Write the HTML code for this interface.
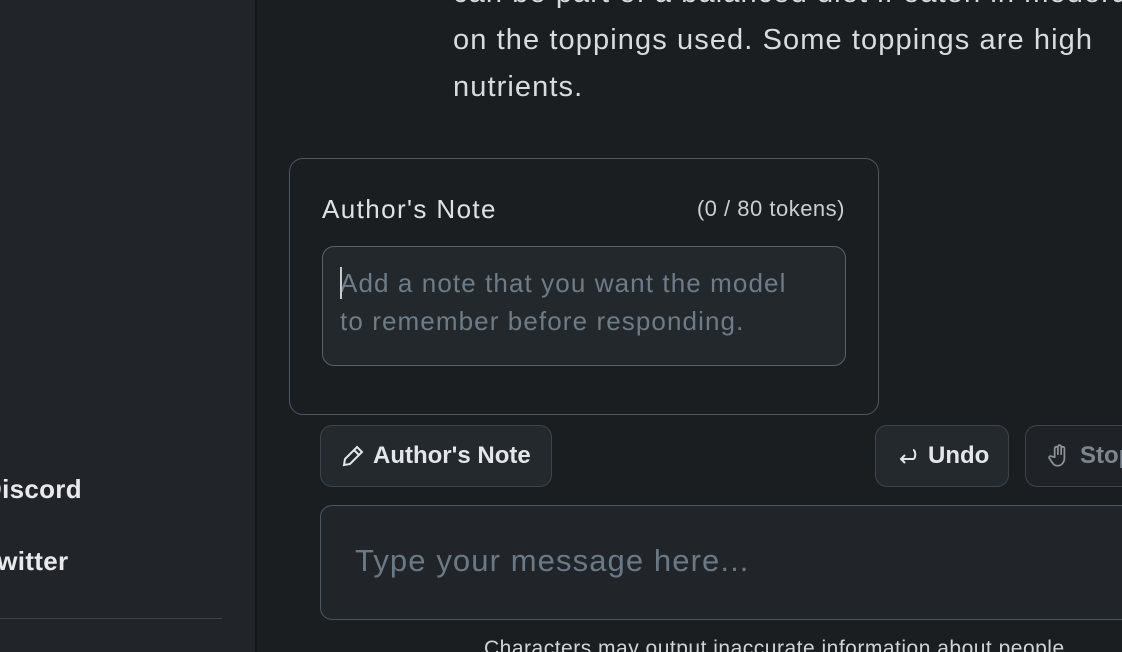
<!DOCTYPE html>
<html><head><style>
html,body{margin:0;width:1122px;height:652px;overflow:hidden}
body{background:#1b1e21;font-family:"Liberation Sans",sans-serif;position:relative}
.wrap{position:absolute;left:0;top:0;width:1122px;height:652px;overflow:hidden}
.side{position:absolute;left:0;top:0;width:255px;height:652px;background:#212529;border-right:2px solid #141618;overflow:hidden}
.sl{position:absolute;left:-17px;font-size:26px;font-weight:bold;color:#e8eaec;letter-spacing:0.3px}
.hr{position:absolute;left:0;top:618px;width:222px;height:1px;background:#3d4349}
.msg{position:absolute;left:453px;top:-30px;font-size:29px;line-height:47px;color:#d8dcdf;white-space:nowrap;letter-spacing:1.1px}
.card{position:absolute;left:289px;top:158px;width:590px;height:257px;border:1.5px solid #4b5863;border-radius:14px;box-sizing:border-box;background:#1b1e21}
.t1{position:absolute;left:322px;top:194px;font-size:26px;color:#dfe2e5;letter-spacing:1.4px}
.t2{position:absolute;right:277px;top:196px;font-size:22px;color:#c9ced2;letter-spacing:0.5px}
.ta{position:absolute;left:322px;top:246px;width:524px;height:120px;border:1.5px solid #55636e;border-radius:12px;box-sizing:border-box;background:#23282c;padding:17px 17px;font-size:26px;line-height:38px;color:#6d7c88;letter-spacing:1.1px}
.ta:before{content:"";position:absolute;left:17px;top:20px;width:2px;height:32px;background:#c8ccd0}
.btn{position:absolute;top:425px;height:62px;border:1.5px solid #3c454d;border-radius:12px;box-sizing:border-box;background:#24292e;color:#e4e7ea;font-size:24px;font-weight:bold;display:flex;align-items:center;gap:8px;padding-left:20px}
.inp{position:absolute;left:320px;top:505px;width:830px;height:115px;border:1.5px solid #4a5761;border-radius:12px;box-sizing:border-box;background:#212529;font-size:31px;color:#6a7986;padding:37px 34px;letter-spacing:1.1px}
.foot{position:absolute;left:484px;top:637px;font-size:21px;color:#d0d4d8;white-space:nowrap;letter-spacing:0.5px}
</style></head><body><div class="wrap">
<div class="side">
<div class="sl" style="top:474px">Discord</div>
<div class="sl" style="top:546px">Twitter</div>
<div class="hr"></div>
</div>
<div class="msg">can be part of a balanced diet if eaten in moderation<br>on the toppings used. Some toppings are high<br>nutrients.</div>
<div class="card"></div>
<div class="t1">Author's Note</div>
<div class="t2">(0 / 80 tokens)</div>
<div class="ta">Add a note that you want the model<br>to remember before responding.</div>
<div class="btn" style="left:320px;width:232px"><svg width="24" height="24" viewBox="0 0 24 24" fill="none" stroke="#e4e7ea" stroke-width="2"><path d="M16 3l5 5L9 20l-6 1 1-6z"/><path d="M13 6l5 5"/></svg>Author's Note</div>
<div class="btn" style="left:875px;width:134px"><svg width="24" height="24" viewBox="0 0 24 24" fill="none" stroke="#e4e7ea" stroke-width="2"><path d="M17 6c3 0 3 9 0 9H5"/><path d="M9 11l-4 4 4 4"/></svg>Undo</div>
<div class="btn" style="left:1025px;width:140px;color:#7d868e;background:#1f2327"><svg width="26" height="26" viewBox="0 0 24 24" fill="none" stroke="#8a939b" stroke-width="1.6"><path d="M8 13V5a1.5 1.5 0 013 0v6V3.5a1.5 1.5 0 013 0V11V5a1.5 1.5 0 013 0v9c0 4-3 7-6 7s-4-1-6-4l-2-3a1.5 1.5 0 012.5-1.5z"/></svg>Stop</div>
<div class="inp">Type your message here...</div>
<div class="foot">Characters may output inaccurate information about people</div>
</div></body></html>
